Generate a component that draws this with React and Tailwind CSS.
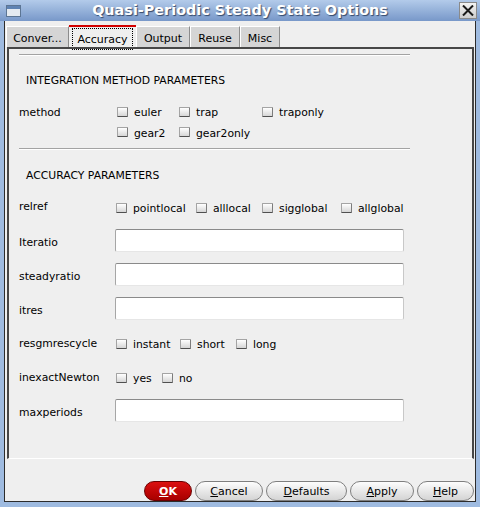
import React from 'react';

const Box = () => (
  <span className="w-[11px] h-[10px] shrink-0 rounded-[1px] border border-[#a4a4a4] border-b-[#4f4f4f] border-r-[#7c7c7c] bg-linear-to-b from-white to-[#d6d6d6]" />
);

const Check = ({ label, className = '' }) => (
  <div className={`flex items-center ${className}`}>
    <Box />
    <span className="ml-[6px] mt-[3px] leading-none">{label}</span>
  </div>
);

const Sep = ({ className = '' }) => (
  <div className={`ml-[10px] w-[391px] h-[2px] border-t border-t-[#a3a3a3] border-b border-b-white ${className}`} />
);

const Field = ({ label, className = '' }) => (
  <div className={`flex items-center h-[23px] pl-[10px] ${className}`}>
    <div className="w-[96px] mt-[6px]">{label}</div>
    <div className="w-[289px] h-[23px] bg-white rounded-[2px] border border-t-[#8a8a8a] border-l-[#a6a6a6] border-r-[#c8c8c8] border-b-[#e6e6e6]" />
  </div>
);

const Btn = ({ u, rest, w }) => (
  <button
    className={`${w} h-[20px] rounded-[10px] border border-[#7f7f7f] bg-linear-to-b from-[#fdfdfd] to-[#d4d4d4] text-[11px] text-black leading-none flex items-center justify-center`}
  >
    <span>
      <span className="underline">{u}</span>
      {rest}
    </span>
  </button>
);

export default function App() {
  return (
    <div className="w-[480px] h-[507px] flex flex-col bg-[#9fbbe0] font-['DejaVu_Sans',sans-serif] text-[10.8px] text-black">
      {/* Title bar */}
      <div className="h-[21px] shrink-0 flex items-center bg-linear-to-b from-[#b3cbea] to-[#7898c9]">
        <svg width="15" height="12" className="ml-[6px] shrink-0" viewBox="0 0 15 12">
          <rect x="0.5" y="0.5" width="14" height="11" fill="#e4eaf1" stroke="#5c7594" />
          <rect x="1" y="1" width="13" height="3" fill="#5f83b3" />
        </svg>
        <div className="flex-1 text-center text-white font-bold text-[14.4px] leading-none [text-shadow:1px_1px_1px_#33486a]">
          Quasi-Periodic Steady State Options
        </div>
        <div className="w-[18px] h-[17px] mr-[3px] shrink-0 border border-[#8a8a8a] bg-linear-to-b from-[#f4f4f4] to-[#cdcdcd] flex items-center justify-center">
          <svg width="12" height="11" viewBox="0 0 12 11">
            <path d="M1 0.5 L11 10.5 M11 0.5 L1 10.5" stroke="#1a1a1a" strokeWidth="2" />
          </svg>
        </div>
      </div>

      {/* Window body */}
      <div className="flex-1 flex px-[4px] pb-[5px]">
        <div className="flex-1 flex flex-col bg-[#efefef] border-x border-b border-[#2c2c2c]">
          {/* Tabs */}
          <div className="h-[26px] shrink-0 flex items-end pl-[1px] text-[11px]">
            <div className="w-[63px] h-[21px] bg-[#d5d5d5] border-t border-l border-white border-r border-r-[#8c8c8c] flex items-center justify-center pt-[5px]">
              Conver...
            </div>
            <div className="w-[67px] h-[22px] bg-[#efefef] border-t-2 border-t-[#d40000] flex flex-col">
              <div className="flex-1 mx-[3px] mt-[1px] border border-dotted border-black flex items-center justify-center pt-[3px]">
                Accuracy
              </div>
            </div>
            <div className="w-[54px] h-[21px] bg-[#d5d5d5] border-t border-l border-white border-r border-r-[#8c8c8c] flex items-center justify-center pt-[5px]">
              Output
            </div>
            <div className="w-[50px] h-[21px] bg-[#d5d5d5] border-t border-l border-white border-r border-r-[#8c8c8c] flex items-center justify-center pt-[5px]">
              Reuse
            </div>
            <div className="w-[40px] h-[21px] bg-[#d5d5d5] border-t border-l border-white border-r border-r-[#8c8c8c] flex items-center justify-center pt-[5px]">
              Misc
            </div>
          </div>

          {/* Panel */}
          <div className="h-[412px] shrink-0 ml-[2px] mr-[1px] flex flex-col border-t-2 border-x-2 border-[#474747] border-b border-b-white">
            <Sep className="mt-[5px]" />
            <div className="mt-[13px] h-[20px] flex items-center pl-[17px] pt-[4px]">INTEGRATION METHOD PARAMETERS</div>

            <div className="mt-[12px] h-[21px] flex items-center pl-[10px]">
              <div className="w-[96px] mt-[4px]">method</div>
              <div className="flex pl-[2px] pt-[1px]">
                <Check label="euler" className="w-[62px]" />
                <Check label="trap" className="w-[83px]" />
                <Check label="traponly" />
              </div>
            </div>
            <div className="h-[21px] flex items-center pl-[10px]">
              <div className="w-[96px]" />
              <div className="flex pl-[2px]">
                <Check label="gear2" className="w-[62px]" />
                <Check label="gear2only" />
              </div>
            </div>

            <Sep className="mt-[5px]" />
            <div className="mt-[14px] h-[20px] flex items-center pl-[17px] pt-[4px]">ACCURACY PARAMETERS</div>

            <div className="mt-[14px] h-[20px] flex items-center pl-[10px]">
              <div className="w-[96px] -mt-[2px]">relref</div>
              <div className="flex pl-[1px]">
                <Check label="pointlocal" className="w-[80px]" />
                <Check label="alllocal" className="w-[66px]" />
                <Check label="sigglobal" className="w-[79px]" />
                <Check label="allglobal" />
              </div>
            </div>

            <Field label="Iteratio" className="mt-[11px]" />
            <Field label="steadyratio" className="mt-[11px]" />
            <Field label="itres" className="mt-[11px]" />

            <div className="mt-[14px] h-[20px] flex items-center pl-[10px]">
              <div className="w-[96px]">resgmrescycle</div>
              <div className="flex pl-[1px]">
                <Check label="instant" className="w-[64px]" />
                <Check label="short" className="w-[56px]" />
                <Check label="long" />
              </div>
            </div>

            <div className="mt-[14px] h-[20px] flex items-center pl-[10px]">
              <div className="w-[96px]">inexactNewton</div>
              <div className="flex pl-[1px]">
                <Check label="yes" className="w-[46px]" />
                <Check label="no" />
              </div>
            </div>

            <Field label="maxperiods" className="mt-[11px]" />
          </div>

          {/* Buttons */}
          <div className="flex-1 flex items-end justify-end gap-[3px] pr-[1px]">
            <button className="w-[48px] h-[20px] rounded-[10px] border border-[#6a0000] bg-linear-to-b from-[#dc1010] to-[#a80000] text-white font-bold text-[11px] leading-none flex items-center justify-center">
              <span>
                <span className="underline">O</span>K
              </span>
            </button>
            <Btn u="C" rest="ancel" w="w-[68px]" />
            <Btn u="D" rest="efaults" w="w-[81px]" />
            <Btn u="A" rest="pply" w="w-[64px]" />
            <Btn u="H" rest="elp" w="w-[57px]" />
          </div>
        </div>
      </div>
    </div>
  );
}
